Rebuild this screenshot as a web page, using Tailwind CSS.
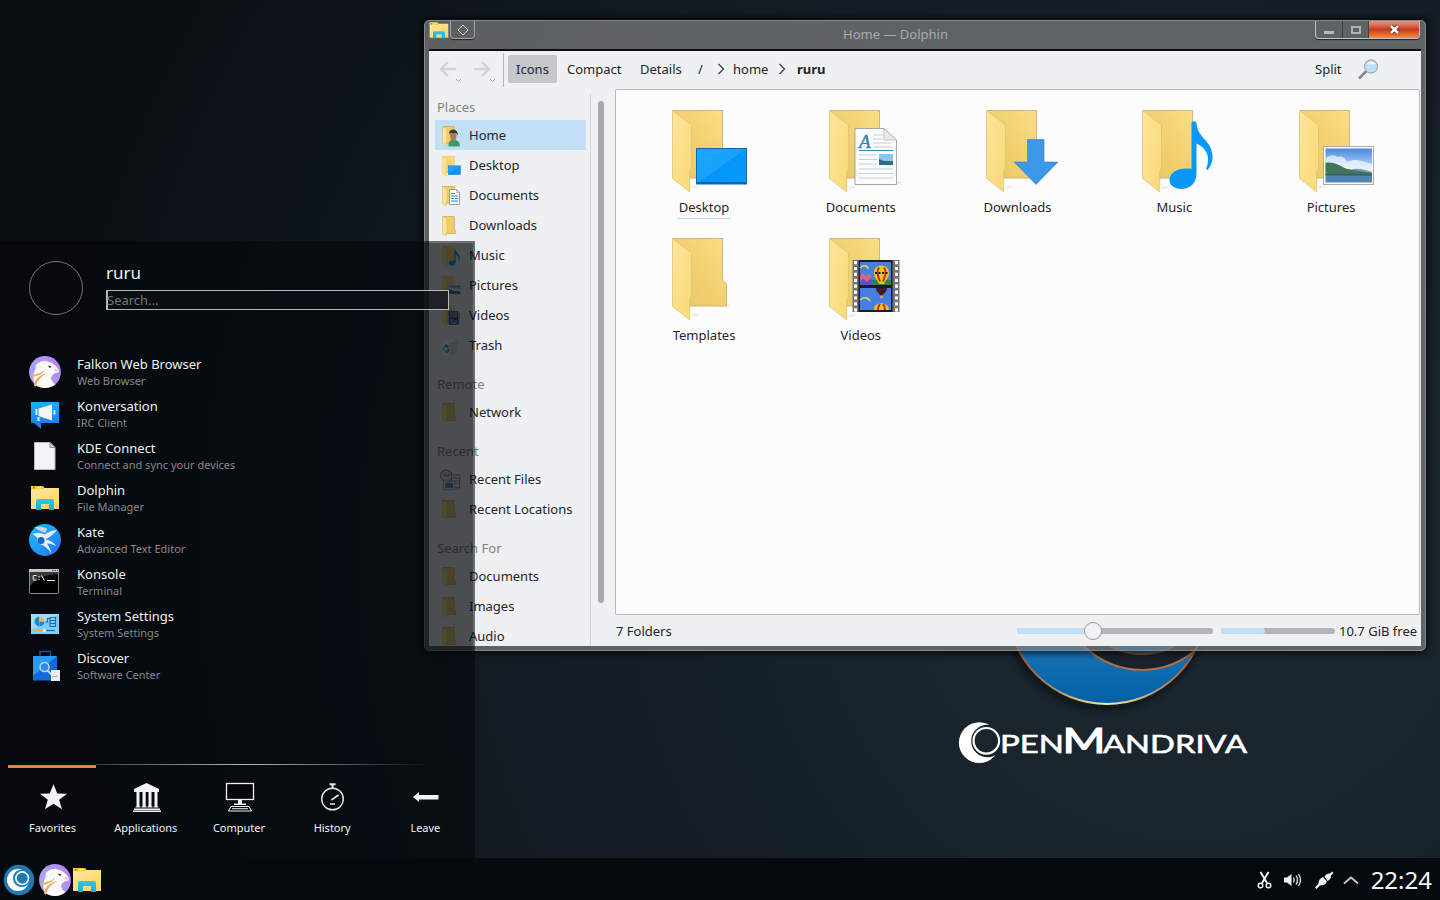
<!DOCTYPE html>
<html lang="en">
<head>
<meta charset="utf-8">
<title>Desktop</title>
<script src="https://cdn.jsdelivr.net/npm/@tailwindcss/browser@4"></script>
</head>
<body class="relative h-[900px] w-[1440px] overflow-hidden bg-[#101820] font-['Noto_Sans',sans-serif] text-[13px] leading-none text-[#232629]">

<!-- shared icon definitions -->
<svg class="absolute size-0" aria-hidden="true">
  <defs>
    <linearGradient id="gBack" x1="0" y1="1" x2="1" y2="0"><stop offset="0" stop-color="#e9c565"/><stop offset=".5" stop-color="#f2d070"/><stop offset="1" stop-color="#fbdd84"/></linearGradient>
    <linearGradient id="gFlap" x1="0" y1="0" x2="1" y2="1"><stop offset="0" stop-color="#fde69a"/><stop offset="1" stop-color="#f9d877"/></linearGradient>
    <linearGradient id="gScreen" x1="0" y1="0" x2="1" y2="1"><stop offset="0" stop-color="#1ba8ff"/><stop offset=".5" stop-color="#18a0fb"/><stop offset=".5" stop-color="#0295fb"/><stop offset="1" stop-color="#0a9dff"/></linearGradient>
    <linearGradient id="gBlueV" x1="0" y1="0" x2="0" y2="1"><stop offset="0" stop-color="#1eaefb"/><stop offset="1" stop-color="#1a74e8"/></linearGradient>
    <linearGradient id="gSky" x1="0" y1="0" x2="0" y2="1"><stop offset="0" stop-color="#4c86e0"/><stop offset=".45" stop-color="#9cc8f5"/><stop offset="1" stop-color="#fff"/></linearGradient>
    <linearGradient id="gPurple" x1="0" y1="0" x2="1" y2="0"><stop offset="0" stop-color="#a9a5f5"/><stop offset="1" stop-color="#bd7ff5"/></linearGradient>
    <linearGradient id="gYellow" x1="0" y1="0" x2="1" y2="1"><stop offset="0" stop-color="#ffe9a0"/><stop offset="1" stop-color="#fbd55f"/></linearGradient>
    <linearGradient id="gCyan" x1="0" y1="0" x2="0" y2="1"><stop offset="0" stop-color="#35c3ec"/><stop offset="1" stop-color="#08b4e6"/></linearGradient>
    <linearGradient id="gKate" x1="0" y1="0" x2="1" y2="1"><stop offset="0" stop-color="#14c0f8"/><stop offset=".5" stop-color="#1f9cfa"/><stop offset="1" stop-color="#2a6cf2"/></linearGradient>

    <symbol id="folder" viewBox="0 0 96 96">
      <path d="M35 87.500l6-1 3-2.500h-8z" fill="#000" opacity=".05"/>
      <path d="M17 8.500H66.500V76H17z" fill="url(#gBack)" stroke="#bfa871" stroke-width=".8"/>
      <path d="M16.500 8.500L35.500 23v43l-1.800 2.500V90L16.500 76.500z" fill="url(#gFlap)" stroke="#d9bd70" stroke-width=".6"/>
    </symbol>
    <symbol id="plain" viewBox="0 0 96 96">
      <path d="M35 87.500l6-1 3-2.500h-8zM68 77l7-1-3-2z" fill="#000" opacity=".05"/>
      <path d="M17 8.500H66.500V50l4 4V76H17z" fill="url(#gBack)" stroke="#bfa871" stroke-width=".8"/>
      <path d="M16.500 8.500L35.500 23v43l-1.800 2.500V90L16.500 76.500z" fill="url(#gFlap)" stroke="#d9bd70" stroke-width=".6"/>
    </symbol>
    <symbol id="mini" viewBox="0 0 24 24">
      <path d="M4.500 2.500h11.800V15l1.400 1.500V19.500H8z" fill="#f0cd6a" stroke="#c9ac62" stroke-width=".8"/>
      <path d="M4.500 2.500L9 4.500V17l-.7.800V22L4.500 19.500z" fill="#fde28f" stroke="#d9bd70" stroke-width=".6"/>
    </symbol>
    <symbol id="desktop" viewBox="0 0 96 96"><use href="#folder"/>
      <rect x="40.500" y="46.500" width="50" height="35.500" fill="url(#gScreen)" stroke="#1769a4"/><path d="M41 81h49" stroke="#0d5d96" stroke-width="1.500"/>
    </symbol>
    <symbol id="docs" viewBox="0 0 96 96"><use href="#folder"/>
      <path d="M83 83l5-1.500 2-2h-7z" fill="#000" opacity=".08"/>
      <path d="M42 26.500H71L83.500 38v44.500H42z" fill="#fafbfd" stroke="#a5a7aa"/>
      <path d="M71 26.500V38H83.500z" fill="#e9e9e9" stroke="#b5b5b5" stroke-width=".8"/>
      <text x="46" y="45.500" font-family="Liberation Serif, serif" font-style="italic" font-size="19" fill="#2b84bd" stroke="#2b84bd" stroke-width=".4">A</text>
      <path d="M60 33h10M60 37h10M60 41h19M60 45h19M46 53h18M46 57.500h18M46 62h18M46 67h34M46 71.500h34M46 76h34" stroke="#c2cad1" stroke-width=".9"/>
      <path d="M46 48.500h34" stroke="#3588b2" stroke-width="1.200"/>
      <rect x="66" y="52" width="14" height="11" fill="#8fc4ee"/><path d="M66 57l5 2 9 0v4H66z" fill="#2d6e87"/>
    </symbol>
    <symbol id="docsMini" viewBox="0 0 24 24"><use href="#mini"/>
      <path d="M11.500 5.500h7l3 3v12h-10z" fill="#f7f9fb" stroke="#9a9ea2"/><path d="M18.500 5.500v3h3" fill="none" stroke="#9a9ea2" stroke-width=".7"/>
      <path d="M13 9.500h4M13 12h7M13 14.500h3M17 14.500h3M13 17h7" stroke="#3588c8"/>
    </symbol>
    <symbol id="down" viewBox="0 0 96 96"><use href="#folder"/>
      <path d="M57.500 37.500H74V60h14L66 82.500 44 60h13.500z" fill="#3c97e6" stroke="#3285cc" stroke-width=".6"/>
    </symbol>
    <symbol id="music" viewBox="0 0 96 96"><use href="#folder"/>
      <path d="M65.500 20.500q2.500-2.500 5 0c0 15 16 18 16 34 0 6-2 10-5 13.500l-1.500-1c5-11 1-21-9.500-25.500V72c0 9-7 15-15 15-7 0-12-3.500-12-9 0-8 10-13 22-11z" fill="#0a98f8"/>
    </symbol>
    <symbol id="pics" viewBox="0 0 96 96"><use href="#folder"/>
      <rect x="40.500" y="44.500" width="50" height="38" fill="#fff" stroke="#a8aaac"/>
      <rect x="42.500" y="46.500" width="46.500" height="34" fill="url(#gSky)"/>
      <path d="M43 56c4-4 10-3 11-1 6-2 9 2 10 5 8-4 15-1 25 2v8H43z" fill="#fff" opacity=".65"/>
      <path d="M66 69c6-4 14-2 23 1v3H60z" fill="#7c97b8"/>
      <path d="M42.500 61c9-2 15 4 22 6 7 1 15 3 24.500 4v2H42.500z" fill="#40755a"/>
      <path d="M42.500 72.500H89v8H42.500z" fill="#4f85b0"/><path d="M42.500 72H89v1.500H42.500z" fill="#2f5f72"/>
    </symbol>
    <symbol id="videos" viewBox="0 0 96 96"><use href="#folder"/>
      <path d="M39.500 30h47v52h-47z" fill="#747474"/>
      <path d="M42.500 31v51M83.500 31v51" stroke="#fff" stroke-width="3" stroke-dasharray="3.200 2.700"/>
      <path d="M45.500 30h34v52h-34z" fill="#1d1d1f"/>
      <path d="M47 32h31v23H47zM47 58h31v22H47z" fill="#4480e0"/>
      <path d="M47 47c3-9 5 2 7-2s4 2 6 6v4H47z" fill="#e0607e"/><path d="M47 52c3-5 4-3 7 0l4-4 2 7H47z" fill="#5a4fd0"/>
      <path d="M58 50h20v5H61z" fill="#2b8448"/>
      <path d="M47 38c3-4 8-2 8 1M47 70c4-4 9-2 10 1" stroke="#d9d455" stroke-width="1.600" fill="none"/>
      <path d="M61 43c0-10 15-10 15 0 0 5-3 6-5 11h-5c-2-5-5-6-5-11z" fill="#efc21e"/>
      <path d="M66 37.500c-3 4-1 9 1 14M71 37.500c3 4 1 9-1 14" stroke="#c42b1c" stroke-width="2" fill="none"/><path d="M62 43h13" stroke="#1f1d14" stroke-width="1.800" stroke-dasharray="2 1.500"/>
      <path d="M63 58h11c0 4-3 5-4 7h-3c-1-2-4-3-4-7z" fill="#4a1a28"/><path d="M67 66h3v2h-3z" fill="#e5a02a"/>
      <path d="M61 80c-1-9 15-9 15 0z" fill="#efc21e"/><path d="M65 80c0-4 1-5 2-6M72 80c0-4-1-5-2-6" stroke="#c42b1c" stroke-width="2" fill="none"/>
    </symbol>
    <symbol id="homef" viewBox="0 0 24 24"><use href="#mini"/>
      <path d="M10.500 22.500c-.5-5 2-7 5-7s6.500 2 6.500 7z" fill="#3f9a68"/>
      <path d="M11.800 10c0-4.500 6.800-4.500 6.800.5s-1.500 6.500-3.200 6.500-3.600-2.500-3.600-7z" fill="#a87a58"/>
      <path d="M11 9.500c0-5.500 9-5.500 9 2l-1.800-2.500c-2.500.2-4.500-.3-7.200.5z" fill="#3d3833"/>
    </symbol>
    <symbol id="trash" viewBox="0 0 96 96">
      <path d="M16 24L52 8l40 10-8 66-36 10-26-12z" fill="#fff"/><path d="M50 30l42-12-8 66-34 10z" fill="#cfd8df"/><path d="M16 24L52 8l40 10-42 12z" fill="#fff"/>
      <path d="M26 54l10-12 10 12M48 60l-6 14-12-2M24 66l-2-8" fill="none" stroke="#1f9bea" stroke-width="9"/>
    </symbol>
    <symbol id="recent" viewBox="0 0 96 96">
      <circle cx="28" cy="30" r="25" fill="#dcdfe2" stroke="#8b8f94" stroke-width="5"/><path d="M18 20l10 12 16-8" fill="none" stroke="#555" stroke-width="4"/>
      <path d="M50 26h36v56H50z" fill="#eee" stroke="#888" stroke-width="4"/><path d="M56 40h26M56 52h26M56 64h26" stroke="#999" stroke-width="4"/>
      <path d="M16 54h48v36H16z" fill="#fff" stroke="#888" stroke-width="3"/><path d="M22 60h36v24H22z" fill="#4b8ed0"/>
    </symbol>
    <symbol id="falkon" viewBox="0 0 32 32">
      <circle cx="16" cy="16" r="15.900" fill="url(#gPurple)"/>
      <path d="M6.500 13C8 8 12 5.500 17 5.500c6 0 10 4 12.500 8 1 2 .5 3.500-1 3.200-3 .3-5 2-6 5 1 4 3.500 6 4 6.500-5 4.500-14 5-20.500.8C3.500 24 4 18 6.500 13z" fill="#fbfaf8"/>
      <path d="M7 9c4-4 9-5 12-3.500-5 .5-10 2.500-13 7z" fill="#fff"/>
      <path d="M5.500 14c3-3.500 6-4.500 9-4.500-4 2-8 3.500-9 4.500z" fill="#e8e3f2"/>
      <path d="M2.500 18.500c6 0 10-1.500 14-5-2.500 4.500-8 7-14 7.500zM5 29.500c.5-7 6-10.500 13-12.500-6 4-9 6.500-11.500 14z" fill="#eab160"/>
      <path d="M22 22c1.500-4 4-5 8.500-5.500 1 5-.5 8-4 12-3-2-4-4-4.500-6.500z" fill="#ae92ed"/>
      <path d="M19 9.500l3.500 1-.8 1.200q-1.900.2-2.700-2.200z" fill="#2e2a35"/><path d="M25.500 12.500c2 0 3.500 1 4.500 3l-4.500.3z" fill="#d7d3da"/>
    </symbol>
    <symbol id="dolphin" viewBox="0 0 32 32">
      <path d="M2 4h12l1.500 2H30v21H2z" fill="url(#gYellow)"/><path d="M2 4h12l1 3.200H2z" fill="#f0c93c"/><path d="M4 5h1.500v1.500H4z" fill="#4a8f3c"/><path d="M8 5h4v1.200H8z" fill="#fff4c4"/>
      <path d="M7 28V19q0-2 2-2h14q2 0 2 2v9h-5v-6h-8v6z" fill="url(#gCyan)"/>
    </symbol>
  </defs>
</svg>

<!-- wallpaper -->
<svg class="absolute inset-0" width="1440" height="900" viewBox="0 0 1440 900">
  <defs>
    <radialGradient id="bg" gradientUnits="userSpaceOnUse" cx="1190" cy="560" r="1150"><stop offset="0" stop-color="#1b2730"/><stop offset=".3" stop-color="#19232c"/><stop offset=".65" stop-color="#121a22"/><stop offset="1" stop-color="#0a0f14"/></radialGradient>
    <linearGradient id="orb" x1="0" y1="0" x2="0" y2="1"><stop offset=".7" stop-color="#1773b4"/><stop offset="1" stop-color="#0060a8"/></linearGradient>
    <linearGradient id="rim" x1="0" y1="0" x2="1" y2="0"><stop offset=".1" stop-color="#a5603c"/><stop offset=".5" stop-color="#f3efa8"/><stop offset=".9" stop-color="#a5603c"/></linearGradient>
    <filter id="soft" x="-20%" y="-20%" width="140%" height="140%"><feGaussianBlur stdDeviation="4"/></filter>
    <mask id="moon"><rect x="950" y="715" width="60" height="60" fill="#fff"/><circle cx="987.500" cy="741" r="16.300" fill="#000"/></mask>
    <clipPath id="orbClip"><circle cx="1107" cy="604.500" r="99"/></clipPath>
  </defs>
  <rect width="1440" height="900" fill="url(#bg)"/>
  <circle cx="1105" cy="606" r="102" fill="#060809" opacity=".7" filter="url(#soft)"/>
  <circle cx="1107" cy="604.500" r="99.500" fill="url(#orb)" stroke="url(#rim)" stroke-width="2"/>
  <g clip-path="url(#orbClip)"><circle cx="1142" cy="588" r="82" fill="#19222b" stroke="#a9704c" stroke-width="2"/></g>
  <circle cx="1142" cy="585" r="69" fill="#1169a6" stroke="#80503e" stroke-width="2"/>
  <circle cx="979.300" cy="742.700" r="20.400" fill="#fff" mask="url(#moon)"/>
  <circle cx="986.300" cy="740.800" r="12.800" fill="none" stroke="#fff" stroke-width="2.200"/>
  <g fill="#fff" stroke="#fff" stroke-width=".6" font-family="Lato, sans-serif" font-weight="400">
    <text x="1000" y="753" font-size="25.500" textLength="64" lengthAdjust="spacingAndGlyphs">PEN</text>
    <text x="1062.500" y="753" font-size="34.500" stroke-width="1.200" textLength="43" lengthAdjust="spacingAndGlyphs">M</text>
    <text x="1103" y="753" font-size="25.500" textLength="144" lengthAdjust="spacingAndGlyphs">ANDRIVA</text>
  </g>
</svg>

<!-- file manager window -->
<main class="absolute left-[424px] top-[20px] flex h-[631px] w-[1002px] flex-col rounded-[5px] border border-[#85888a] bg-[#7d8082]/70 px-1 pb-1 shadow-[0_0_6px_3px_rgba(0,0,0,0.6)]">
  <header class="flex h-[28px] shrink-0 items-start">
    <svg class="mt-0 h-[19px] w-[20px]" viewBox="1 3 30 26"><use href="#dolphin" width="32" height="32"/></svg>
    <div class="ml-[1px] flex h-[18px] w-[25px] items-center justify-center rounded-b-[4px] border border-t-0 border-[#a4a6a8] shadow-[0_1px_1px_#222]">
      <svg class="size-[12px]" viewBox="0 0 12 12"><path d="M6 1L11 6 6 11 1 6z" fill="none" stroke="#d5d7d8"/></svg>
    </div>
    <h1 class="ml-px flex-1 pt-[7px] text-center text-[#a9abad]">Home — Dolphin</h1>
    <div class="flex h-[18px] w-[105px] overflow-hidden rounded-b-[4px] border border-t-0 border-[#c3c5c6] shadow-[0_1px_1px_#222]">
      <div class="flex w-[27px] items-center justify-center border-r border-[#3c3e40]"><div class="mt-[5px] h-[3px] w-[10px] bg-[#b7b9ba]"></div></div>
      <div class="flex w-[26px] items-center justify-center border-r border-[#3c3e40]"><div class="h-[8px] w-[10px] border-2 border-[#aeb0b1]"></div></div>
      <div class="flex flex-1 items-center justify-center bg-linear-to-b from-[#e29a86] via-[#c43a1d] via-50% to-[#f58a4c]">
        <svg class="h-[11px] w-[13px]" viewBox="0 0 13 11"><path d="M3 2l7 7M10 2L3 9" stroke="#5b2018" stroke-width="4"/><path d="M3 2l7 7M10 2L3 9" stroke="#fff" stroke-width="2.600"/></svg>
      </div>
    </div>
    <div class="w-[1px]"></div>
  </header>

  <section class="flex min-h-0 flex-1 flex-col overflow-hidden border-t-2 border-[#0b0d0f] bg-[#eff0f1]">
    <nav class="flex h-[38px] shrink-0 items-center [&>b]:-mt-[2px] [&>span]:-mt-[2px]">
      <svg class="ml-[10px] h-[26px] w-[64px]" viewBox="0 0 64 26" fill="none">
        <path d="M2 12h15M9 5l-7 7 7 7M35 12h15M43 5l7 7-7 7" stroke="#d2d3d4" stroke-width="2.400"/>
        <path d="M17 22l2.500 2.500L22 22M51 22l2.500 2.500L56 22" stroke="#a5a7a9"/>
      </svg>
      <div class="h-[34px] w-px bg-[#b4b6b8]"></div>
      <div class="-mt-[2px] ml-[4px] flex h-[28px] w-[49px] items-center justify-center rounded-[2px] bg-[#c6c7c9] pt-px">Icons</div>
      <span class="ml-[10px] w-[73px]">Compact</span>
      <span class="w-[58px]">Details</span>
      <span class="w-[18px]">/</span>
      <svg class="-mt-[2px] h-[12px] w-[17px]" viewBox="0 0 17 12"><path d="M2.500 1l5 5-5 5" fill="none" stroke="#3c3f42" stroke-width="1.300"/></svg>
      <span class="w-[44px]">home</span>
      <svg class="-mt-[2px] h-[12px] w-[20px]" viewBox="0 0 20 12"><path d="M2.500 1l5 5-5 5" fill="none" stroke="#3c3f42" stroke-width="1.300"/></svg>
      <b class="flex-1">ruru</b>
      <span class="w-[43px]">Split</span>
      <svg class="-mt-[2px] mr-[42px] size-[21px]" viewBox="0 0 21 21"><path d="M1 19.500l8-8" stroke="#83878b" stroke-width="2.500"/><circle cx="13" cy="7.500" r="6.500" fill="#bfe1f7" stroke="#a5aeb6" stroke-width="1.300"/><path d="M8 6c2-4 7-4 10-1-3 1-7 0-10 1z" fill="#e9f6fd"/></svg>
    </nav>

    <div class="flex min-h-0 flex-1">
      <aside class="mt-[5px] w-[162px] shrink-0 overflow-hidden border-r border-[#d2d4d6] [&_h2]:mt-[11px] [&_h2]:flex [&_h2]:h-[26px] [&_h2]:items-center [&_h2]:pl-[8px] [&_h2]:pt-px [&_h2]:text-[#7f8183] [&_li]:ml-[6px] [&_li]:mr-[4px] [&_li]:flex [&_li]:h-[30px] [&_li]:items-center [&_li]:whitespace-nowrap [&_li]:pt-px [&_svg]:ml-[3px] [&_svg]:mr-[7px] [&_svg]:size-[24px]">
        <h2 class="!mt-0">Places</h2>
        <ul>
          <li class="bg-[#c1dff5]"><svg><use href="#homef"/></svg>Home</li>
          <li><svg><use href="#desktop"/></svg>Desktop</li>
          <li><svg><use href="#docsMini"/></svg>Documents</li>
          <li><svg><use href="#mini"/></svg>Downloads</li>
          <li><svg><use href="#music"/></svg>Music</li>
          <li><svg><use href="#pics"/></svg>Pictures</li>
          <li><svg><use href="#videos"/></svg>Videos</li>
          <li><svg viewBox="-1 -3 29 29"><use href="#trash" width="24" height="24"/></svg>Trash</li>
        </ul>
        <h2>Remote</h2>
        <ul><li><svg><use href="#mini"/></svg>Network</li></ul>
        <h2>Recent</h2>
        <ul>
          <li><svg viewBox="-2 -1 26 26"><use href="#recent" width="24" height="24"/></svg>Recent Files</li>
          <li><svg><use href="#mini"/></svg>Recent Locations</li>
        </ul>
        <h2>Search For</h2>
        <ul>
          <li><svg><use href="#mini"/></svg>Documents</li>
          <li><svg><use href="#mini"/></svg>Images</li>
          <li><svg><use href="#mini"/></svg>Audio</li>
        </ul>
      </aside>
      <div class="w-[24px] shrink-0 pl-[7px] pt-[12px]"><div class="h-[502px] w-[6px] rounded-full bg-[#a6a8aa]"></div></div>

      <div class="flex min-w-0 flex-1 flex-col">
        <div class="mr-px grid h-[526px] shrink-0 grid-cols-[repeat(5,156.75px)] content-start rounded-[2px] border border-[#b5b7b9] bg-[#fcfcfc] pl-[9.7px] pt-[12px] [&>figure]:flex [&>figure]:h-[128px] [&>figure]:flex-col [&>figure]:items-center [&_svg]:size-[96px]">
          <figure><svg><use href="#desktop"/></svg><figcaption class="-mt-[2px] h-[23px] border-b border-[#b0d8ef] px-[2px] pt-[5px]">Desktop</figcaption></figure>
          <figure><svg><use href="#docs"/></svg><figcaption class="pt-[3px]">Documents</figcaption></figure>
          <figure><svg><use href="#down"/></svg><figcaption class="pt-[3px]">Downloads</figcaption></figure>
          <figure><svg><use href="#music"/></svg><figcaption class="pt-[3px]">Music</figcaption></figure>
          <figure><svg><use href="#pics"/></svg><figcaption class="pt-[3px]">Pictures</figcaption></figure>
          <figure><svg><use href="#plain"/></svg><figcaption class="pt-[3px]">Templates</figcaption></figure>
          <figure><svg><use href="#videos"/></svg><figcaption class="pt-[3px]">Videos</figcaption></figure>
        </div>
        <footer class="flex flex-1 items-center pl-px">
          <span class="flex-1 pt-px">7 Folders</span>
          <div class="relative flex h-[6px] w-[196px] rounded-full bg-[#b2b4b6]">
            <div class="w-[76px] rounded-l-full bg-[#c1dff5]"></div>
            <div class="absolute -top-[6px] left-[67px] size-[18px] rounded-full border border-[#9a9c9e] bg-[#f1f2f3]"></div>
          </div>
          <div class="ml-[8px] h-[6px] w-[114px] overflow-hidden rounded-full bg-[#b2b4b6]"><div class="h-full w-[44px] rounded-r-full bg-[#c1dff5]"></div></div>
          <span class="ml-[4px] w-[82px] whitespace-nowrap pt-px">10.7 GiB free</span>
        </footer>
      </div>
    </div>
  </section>
</main>

<!-- application menu -->
<section class="absolute left-0 top-[241px] flex h-[617px] w-[475px] flex-col border-t-2 border-r-2 border-[#03080b]/55 bg-[#04090d]/70 bg-clip-padding text-[#eff0f1]">
  <div class="flex h-[110px] pl-[29px] pt-[18px]">
    <div class="size-[54px] rounded-full border border-[#6f7376]"></div>
    <div class="ml-[23px]">
      <div class="h-[29px] pt-[3px] text-[17px] leading-none">ruru</div>
      <div class="flex h-[20px] w-[343px] items-center border border-l-2 border-[#b4b8ba] bg-[#0b1015]/70 pt-px text-[#71767a]"><span class="-ml-px">Search...</span></div>
    </div>
  </div>
  <ul class="flex-1 [&>li]:flex [&>li]:h-[42px] [&>li]:pl-[29px] [&_svg]:mr-[16px] [&_svg]:mt-[3px] [&_svg]:size-[32px] [&_p]:mt-[5px] [&_small]:mt-[4px] [&_small]:block [&_small]:text-[11px] [&_small]:text-[#85898c]">
    <li><svg><use href="#falkon"/></svg><div><p>Falkon Web Browser</p><small>Web Browser</small></div></li>
    <li><svg viewBox="0 0 32 32"><path d="M2 4h28v21H12v6l-7-6H2z" fill="url(#gBlueV)"/><path d="M9.500 10.500L23 6.500v16L9.500 18z" fill="#f4f4f2"/><path d="M6.500 11h1.800v6H6.500zM24.500 12h1.800v4.500h-1.800zM8.500 19h2v4h-2z" fill="#fff"/></svg><div><p>Konversation</p><small>IRC Client</small></div></li>
    <li><svg viewBox="0 0 32 32"><path d="M5.500 2.500H21l5 5v22H5.500z" fill="#f3f4f6" stroke="#b9bbbd"/><path d="M21 2.500v5h5z" fill="#ddd" stroke="#777" stroke-width=".8"/></svg><div><p>KDE Connect</p><small>Connect and sync your devices</small></div></li>
    <li><svg><use href="#dolphin"/></svg><div><p>Dolphin</p><small>File Manager</small></div></li>
    <li><svg viewBox="0 0 32 32"><circle cx="16" cy="16" r="15.900" fill="url(#gKate)"/><path d="M5 3.500C9 2 14 2.500 18 4.500L16.500 9C13 8 9 5.500 5 3.500z" fill="#c9d4dd"/><path d="M3.500 10C8 8 13 9 16 10.500 19 8 23 6.500 28 6c-3 4-7 7-11.500 9.500 5 .8 8 3 10.500 6.500-3.500-2-6.500-2.800-9-2.500 2 3.500 4 6.500 4.500 10.500-2.500-4.500-6-8-10.500-9.500C9 19.500 7 17 8.500 14 7 12 5 11 3.500 10z" fill="#eceff2"/><circle cx="12" cy="16.500" r="3.600" fill="#1a66c0"/></svg><div><p>Kate</p><small>Advanced Text Editor</small></div></li>
    <li><svg viewBox="0 0 32 32"><rect x=".5" y="3.500" width="29" height="24" rx="1" fill="#000" stroke="#8a8a8a"/><path d="M1 6h28v2q-20 1-28 12z" fill="#3a3a3a"/><path d="M0 3h30v3H0z" fill="#c9c9c9"/><path d="M23 4.500h1.500M25.500 4.500H27M28 4.500h1" stroke="#444"/><path d="M7.500 9.500H5q-.8 0-.8.800v3q0 .8.800.8h2.500M10 10v1.200M10 13v1.200M12.500 9.500l3 5M18 14.500h8" stroke="#fff" fill="none"/></svg><div><p>Konsole</p><small>Terminal</small></div></li>
    <li><svg viewBox="0 0 32 32"><path d="M2 6h28v20H2z" fill="#7dcff6"/><path d="M2 6h28L2 22z" fill="#9bdcfa"/><circle cx="10.500" cy="13.500" r="5" fill="#fff"/><path d="M10.500 13.500V8.500a5 5 0 1 0 0 10z" fill="#1a86c4"/><path d="M10.500 13.500V8.500a5 5 0 0 1 5 5z" fill="#f5b44c"/><path d="M10.500 13.500h5a5 5 0 0 1-5 5z" fill="#1a86c4"/><path d="M16.500 14h2V10.500h2.500M21 9.500h5.500v9H21zM21 12.500h5.500M21 15.500h5.500" stroke="#1a6fa8" fill="none" stroke-width="1.200"/><path d="M6 22.500h8" stroke="#f5a93c" stroke-width="1.300"/><path d="M16 22.500h10" stroke="#1a6fa8" stroke-width="1.300"/><circle cx="15.500" cy="22.500" r="1.500" fill="#fff"/></svg><div><p>System Settings</p><small>System Settings</small></div></li>
    <li><svg viewBox="0 0 32 32"><path d="M11 7V1.500h10.500V7" fill="none" stroke="#1c4f94" stroke-width="1.500"/><path d="M4 6h24v24.500H4z" fill="#1668d8"/><path d="M4 6h24L4 26z" fill="#2a9af2"/><circle cx="15.500" cy="17" r="4.500" fill="#3386e6" stroke="#bcd9f7" stroke-width="1.500"/><path d="M18.500 20.500l5 5" stroke="#bcd9f7" stroke-width="2"/><path d="M22 20h9v11h-9z" fill="#eceeef"/><path d="M23 27l6-1" stroke="#aaa"/></svg><div><p>Discover</p><small>Software Center</small></div></li>
  </ul>
  <div class="h-[94px] shrink-0">
    <div class="ml-[8px] flex w-[420px] items-start">
      <div class="mt-px h-[3px] w-[88px] bg-[#e8834a]"></div>
      <div class="h-px flex-1 bg-linear-to-r from-[#3a4144] via-[#aebcba] via-45% to-transparent"></div>
    </div>
    <div class="ml-[6px] flex text-center text-[11px] [&>div]:w-[93.200px] [&_svg]:mx-auto [&_svg]:mt-[13px] [&_svg]:mb-[9px] [&_svg]:size-[32px]">
      <div><svg viewBox="0 0 32 32"><path d="M16.500 3l3.700 9.400 9.800.3-7.800 6 2.800 9.500-8.500-5.500L8 28.200l2.800-9.500-7.800-6 9.800-.3z" fill="#f3f3f3"/></svg>Favorites</div>
      <div><svg viewBox="0 0 32 32" fill="#f3f3f3"><path d="M16.500 2L29 8v3H4V8zM4 27.500h26V29H4zM3 29.500h28V31H3zM6.500 11h3v15.500h-3zM12.500 11h3.200v15.500h-3.200zM18.500 11h3v15.500h-3zM24.500 11h3v15.500h-3zM5.500 25.500h5v1h-5zM11.500 25.500h5.200v1h-5.200zM17.500 25.500h5v1h-5zM23.500 25.500h5v1h-5z"/></svg>Applications</div>
      <div><svg viewBox="0 0 32 32" fill="none" stroke="#f0f0f0"><rect x="3.500" y="2.500" width="27" height="16" fill="#05080b" stroke-width="1.300"/><path d="M15 19h4v3.500h4V24H11v-1.500h4z" fill="#eee" stroke="none"/><path d="M8 25.500h18l2.500 4.500h-23zM9 27.700h16"/></svg>Computer</div>
      <div><svg viewBox="0 0 32 32" fill="none" stroke="#e5e5e5" stroke-width="1.400"><circle cx="16.500" cy="18" r="10.800"/><path d="M13.500 3.200h6M16.500 3v5" stroke-width="2"/><path d="M15.500 19l7-5M14 23h5" stroke-width="1.600"/></svg>History</div>
      <div><svg viewBox="0 0 32 32" fill="#f3f3f3"><path d="M4 16l6-5v3h19.500v4.500H10V21z"/></svg>Leave</div>
    </div>
  </div>
</section>

<!-- panel -->
<footer class="absolute bottom-0 left-0 flex h-[42px] w-full items-center bg-[#040a0d] pb-0 pt-[2px] text-[#f3f5f6]">
  <svg class="ml-[3px] size-[32px]" viewBox="0 0 32 32"><circle cx="16" cy="16" r="15.200" fill="#207bb5"/><circle cx="15" cy="16" r="11" fill="#fff"/><circle cx="18.800" cy="14.200" r="8.800" fill="#207bb5"/><circle cx="19.200" cy="14.200" r="6.300" fill="none" stroke="#fff" stroke-width="1.600"/></svg>
  <svg class="ml-[4px] size-[32px]"><use href="#falkon"/></svg>
  <svg class="size-[32px]"><use href="#dolphin"/></svg>
  <div class="flex-1"></div>
  <svg class="size-[20px]" viewBox="0 0 20 20" fill="none" stroke="#f2f2f2"><path d="M5.500 2l6.500 11M13.500 2L7 13" stroke-width="2"/><circle cx="5.500" cy="15.500" r="2.300" stroke-width="1.500"/><circle cx="13.500" cy="15.500" r="2.300" stroke-width="1.500"/></svg>
  <svg class="ml-[9px] size-[20px]" viewBox="0 0 20 20"><path d="M0 7.500h3L7.500 4v12L3 12.500H0z" fill="#f2f2f2"/><path d="M9.500 7.500q1.500 2.500 0 5M12 5.500q3 4.500 0 9M14.500 4q4 6 0 12" fill="none" stroke="#e5e5e5" stroke-width="1.300"/></svg>
  <svg class="ml-[10px] size-[20px]" viewBox="0 0 20 20"><path d="M1 17.500l3.500-4c0-3.500 2-5.500 4.500-6.500l4 4.500c-1.500 3-4 4-7 4L2.500 19zM10.500 6.500c2-3 4-3 5.500-3L18 1.500 19.500 3l-2.500 2.500c0 2.500-1 4.500-3.500 5.500z" fill="#f2f2f2"/></svg>
  <svg class="ml-[8px] h-[10px] w-[18px]" viewBox="0 0 18 10"><path d="M2 8.500l7-6 7 6" fill="none" stroke="#c6c9ca" stroke-width="1.800"/></svg>
  <time class="ml-[11px] mr-[8px] text-[24px]">22:24</time>
</footer>
</body>
</html>
